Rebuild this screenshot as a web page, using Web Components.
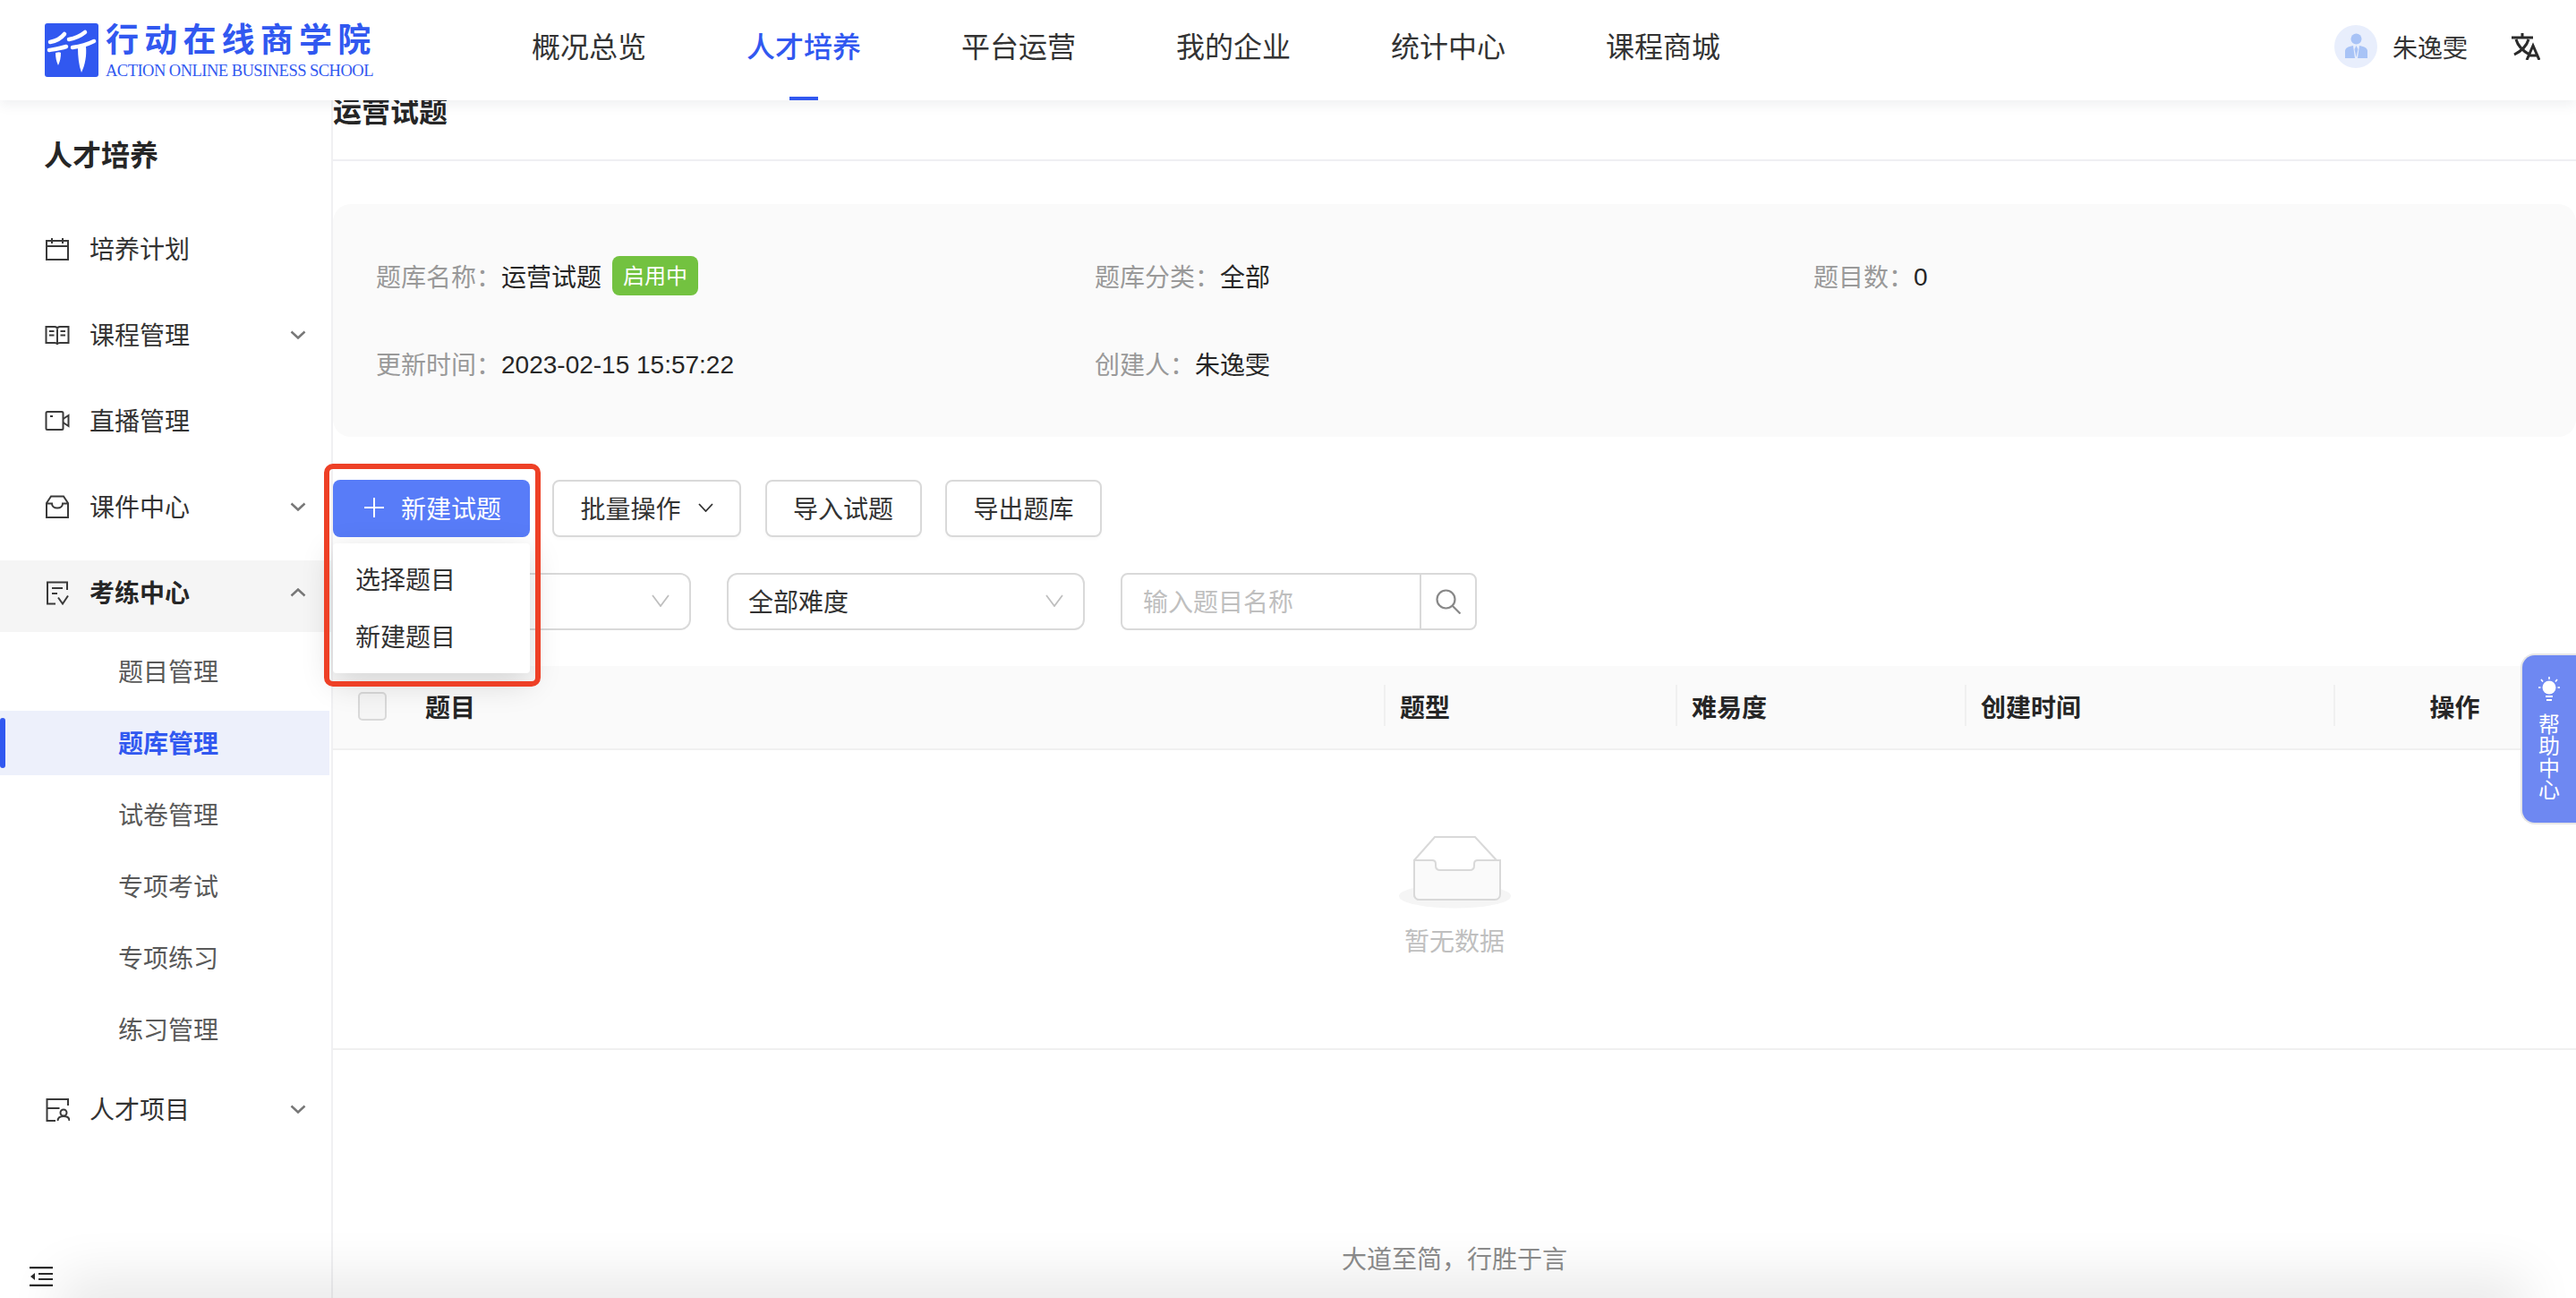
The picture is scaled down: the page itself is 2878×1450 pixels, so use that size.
<!DOCTYPE html>
<html lang="zh-CN">
<head>
<meta charset="utf-8">
<title>运营试题</title>
<style>
    html, body { margin: 0; height: 100%; overflow: hidden; background: #fff; }
    body {
        font-family: "Liberation Sans", "Noto Sans CJK SC", sans-serif;
        font-size: 28px;
        color: #262626;
    }
    .page { display: flex; height: 1338px; }
</style>
</head>
<body>

<app-header>
    <top-link>概况总览</top-link>
    <top-link active>人才培养</top-link>
    <top-link>平台运营</top-link>
    <top-link>我的企业</top-link>
    <top-link>统计中心</top-link>
    <top-link>课程商城</top-link>
</app-header>

<div class="page">
    <side-menu>
        <side-item icon="calendar">培养计划</side-item>
        <side-item icon="book" arrow="down">课程管理</side-item>
        <side-item icon="video">直播管理</side-item>
        <side-item icon="inbox" arrow="down">课件中心</side-item>
        <side-item icon="exam" arrow="up" open>考练中心</side-item>
        <side-sub>题目管理</side-sub>
        <side-sub active>题库管理</side-sub>
        <side-sub>试卷管理</side-sub>
        <side-sub>专项考试</side-sub>
        <side-sub>专项练习</side-sub>
        <side-sub last>练习管理</side-sub>
        <side-item icon="project" arrow="down">人才项目</side-item>
    </side-menu>

    <main-panel>
        <info-card>
            <info-field label="题库名称：">运营试题<status-badge>启用中</status-badge></info-field>
            <info-field label="题库分类：">全部</info-field>
            <info-field label="题目数：" num>0</info-field>
            <info-field label="更新时间：" num>2023-02-15 15:57:22</info-field>
            <info-field label="创建人：">朱逸雯</info-field>
        </info-card>

        <tool-bar>
            <add-menu>新建试题</add-menu>
            <ui-button arrow>批量操作</ui-button>
            <ui-button>导入试题</ui-button>
            <ui-button>导出题库</ui-button>
        </tool-bar>

        <filter-bar>
            <ui-select></ui-select>
            <ui-select>全部难度</ui-select>
            <search-box placeholder="输入题目名称"></search-box>
        </filter-bar>

        <question-table></question-table>
    </main-panel>
</div>

<help-tab>帮助中心</help-tab>
<bottom-fade></bottom-fade>

<script>
const ICONS = {
    calendar: '<rect x="2" y="5" width="24" height="21"/><path d="M2 11h24M8 2v6M20 2v6"/>',
    book: '<path d="M1.500 5H11c1.700 0 3 1 3 2.500C14 6 15.300 5 17 5h9.500v18H17c-1.700 0-3 .6-3 2 0-1.400-1.300-2-3-2H1.500z"/><path d="M14 7.500V25M5 10h5.500M5 14.500h5.500M17.500 10H23M17.500 14.500H23"/>',
    video: '<rect x="1.500" y="4" width="19" height="20" rx="1.500"/><path d="M6 9h3M20.500 12l6-4v12l-6-4"/>',
    inbox: '<path d="M7 2.500h14L26 10v16H2V10zM2 10.500h6c0 3 2.500 5 6 5s6-2 6-5h6"/>',
    exam: '<path d="M25 11V2.500H3v24h9M8 9h12M8 15h6M15 19.500l5 7 6-9"/>',
    project: '<path d="M26 10V3H2.500v24H12M2.500 13h14"/><circle cx="21" cy="18" r="3.500"/><path d="M14.500 27c0-3.200 2.800-5 6.500-5s6.500 1.800 6.500 5"/>'
};

class AppHeader extends HTMLElement {
    constructor() {
        super();
        this.attachShadow({mode: 'open'});
        this.shadowRoot.innerHTML = `
            <style>
                :host {
                    display: flex;
                    align-items: center;
                    height: 112px;
                    padding: 0 40px 0 50px;
                    box-sizing: border-box;
                    background: #fff;
                    box-shadow: 0 4px 14px rgba(40, 50, 80, .08);
                    position: relative;
                    z-index: 5;
                }
                .logo { display: flex; gap: 8px; width: 544px; flex: none; }
                .mark { width: 60px; height: 60px; display: block; }
                .words { display: flex; flex-direction: column; color: #3158f0; height: 60px; white-space: nowrap; }
                .cn { font-size: 37px; font-weight: 700; line-height: 38px; margin-top: 1px; letter-spacing: 6.200px; }
                .en { font-family: "Liberation Serif", serif; font-size: 18.500px; line-height: 18px; margin-top: 5px; letter-spacing: -.52px; }
                nav { display: flex; gap: 112px; }
                .right { margin-left: auto; display: flex; align-items: center; margin-top: -8px; }
                .avatar { width: 48px; height: 48px; display: block; margin-right: 17px; }
                .name { font-size: 28px; color: #333; width: 84px; margin-right: 49px; }
                .lang { width: 32px; height: 30px; display: block; }
            </style>
            <div class="logo">
                <svg class="mark" viewBox="0 0 60 60">
                    <rect width="60" height="60" rx="3" fill="#3158f0"/>
                    <g fill="none" stroke="#fff" stroke-linecap="round" stroke-width="4.500">
                        <path d="M6 21c6-1 12-4 16-9"/>
                        <path d="M5 30c6-1 13-2 19-4"/>
                        <path d="M27 18c6-1 13-4 18-8"/>
                        <path d="M31 27c8-1 16-3 24-7"/>
                    </g>
                    <path d="M12 33c3-1 5-1 6 0 0 5-1 10-3 14-2-4-3-9-3-14zM37 27l9-1c1 10-1 21-5 29-3-8-4-18-4-28z" fill="#fff"/>
                </svg>
                <div class="words">
                    <span class="cn">行动在线商学院</span>
                    <span class="en">ACTION ONLINE BUSINESS SCHOOL</span>
                </div>
            </div>
            <nav><slot></slot></nav>
            <div class="right">
                <svg class="avatar" viewBox="0 0 48 48">
                    <circle cx="24" cy="24" r="24" fill="#e8eefc"/>
                    <circle cx="24.500" cy="15.500" r="6" fill="#a8c3f6"/>
                    <path d="M12 37v-8c0-3 3-5 9-6l2 14zM37 37v-8c0-3-3-5-9-6l-2 14zM24.500 23l2 4-2 9-2-9z" fill="#a8c3f6"/>
                </svg>
                <span class="name">朱逸雯</span>
                <svg class="lang" viewBox="0 0 32 30" fill="none" stroke="#2b2b2b" stroke-width="3">
                    <path d="M0 5h24M12 0v5M5 7c2 7 8 13 15 17M19 7c-2 7-8 13-16 17"/>
                    <path d="M17 30l7-16 7 16M19.500 25h9"/>
                </svg>
            </div>
        `;
    }
}

class TopLink extends HTMLElement {
    constructor() {
        super();
        this.attachShadow({mode: 'open'});
        this.shadowRoot.innerHTML = `
            <style>
                :host {
                    display: flex;
                    align-items: center;
                    height: 112px;
                    padding-bottom: 12px;
                    box-sizing: border-box;
                    position: relative;
                    font-size: 32px;
                    color: #333;
                }
                :host([active]) { color: #3158f0; font-weight: 500; }
                :host([active])::after {
                    content: '';
                    position: absolute;
                    left: 48px;
                    bottom: 0;
                    width: 32px;
                    height: 4px;
                    background: #3158f0;
                }
            </style>
            <slot></slot>
        `;
    }
}

class SideMenu extends HTMLElement {
    constructor() {
        super();
        this.attachShadow({mode: 'open'});
        this.shadowRoot.innerHTML = `
            <style>
                :host {
                    display: flex;
                    flex-direction: column;
                    flex: none;
                    width: 372px;
                    height: 100%;
                    box-sizing: border-box;
                    border-right: 2px solid #f0f0f2;
                    background: #fff;
                }
                h2 {
                    margin: 0 0 16px 49px;
                    font-size: 32px;
                    font-weight: 700;
                    height: 114px;
                    line-height: 124px;
                    color: #262626;
                }
                .collapse { margin: auto 0 13px 33px; width: 26px; height: 22px; display: block; }
            </style>
            <h2>人才培养</h2>
            <slot></slot>
            <svg class="collapse" viewBox="0 0 26 22" fill="none" stroke="#2b2b2b" stroke-width="2.200">
                <path d="M0 1.100h26M10 8h16M10 14h16M0 20.900h26"/>
                <path d="M6 7v8l-5-4z" fill="#2b2b2b" stroke="none"/>
            </svg>
        `;
    }
}

class SideItem extends HTMLElement {
    constructor() {
        super();
        this.attachShadow({mode: 'open'});
        this.shadowRoot.innerHTML = `
            <style>
                :host {
                    display: flex;
                    align-items: center;
                    flex: none;
                    height: 80px;
                    margin-bottom: 16px;
                    padding: 0 28px 10px 50px;
                    box-sizing: border-box;
                    color: #333;
                }
                :host([open]) { background: #f5f5f5; font-weight: 700; margin-bottom: 0; color: #262626; }
                .icon { width: 28px; height: 28px; flex: none; margin-right: 23px; margin-top: 2px; }
                .text { flex: 1; margin-left: -1px; }
                .arrow { width: 18px; height: 10px; flex: none; margin-top: 2px; }
            </style>
            <svg class="icon" viewBox="0 0 28 28" fill="none" stroke="#3a3a3a" stroke-width="2"></svg>
            <span class="text"><slot></slot></span>
            <svg class="arrow" viewBox="0 0 18 10" fill="none" stroke="#777" stroke-width="2.500"></svg>
        `;
    }

    connectedCallback() {
        this.shadowRoot.querySelector('.icon').innerHTML = ICONS[this.getAttribute('icon')] || '';
        const arrow = this.shadowRoot.querySelector('.arrow');
        if (this.getAttribute('arrow') === 'down') {
            arrow.innerHTML = '<path d="M1.500 1.500L9 8.500l7.500-7"/>';
        } else if (this.getAttribute('arrow') === 'up') {
            arrow.innerHTML = '<path d="M1.500 8.500L9 1.500l7.500 7"/>';
        }
    }
}

class SideSub extends HTMLElement {
    constructor() {
        super();
        this.attachShadow({mode: 'open'});
        this.shadowRoot.innerHTML = `
            <style>
                :host {
                    display: flex;
                    align-items: center;
                    flex: none;
                    height: 72px;
                    margin-top: 8px;
                    padding: 0 0 2px 132px;
                    box-sizing: border-box;
                    position: relative;
                    color: #595959;
                }
                :host([last]) { margin-bottom: 17px; }
                :host([active]) { background: #edf0fb; color: #3158f0; font-weight: 700; margin-right: 2px; }
                :host([active])::before {
                    content: '';
                    position: absolute;
                    left: 0;
                    top: 8px;
                    width: 6px;
                    height: 56px;
                    border-radius: 3px;
                    background: #3158f0;
                }
            </style>
            <slot></slot>
        `;
    }
}

class MainPanel extends HTMLElement {
    constructor() {
        super();
        this.attachShadow({mode: 'open'});
        this.shadowRoot.innerHTML = `
            <style>
                :host { display: flex; flex-direction: column; flex: 1; min-width: 0; height: 100%; }
                h1 {
                    margin: 0 0 48px;
                    height: 68px;
                    box-sizing: border-box;
                    border-bottom: 2px solid #efeff3;
                    font-size: 32px;
                    line-height: 26px;
                    font-weight: 600;
                    color: #262626;
                }
                footer {
                    margin-top: auto;
                    height: 40px;
                    line-height: 40px;
                    margin-bottom: 22px;
                    text-align: center;
                    color: #8c8c8c;
                }
            </style>
            <h1>运营试题</h1>
            <slot></slot>
            <footer>大道至简，行胜于言</footer>
        `;
    }
}

class InfoCard extends HTMLElement {
    constructor() {
        super();
        this.attachShadow({mode: 'open'});
        this.shadowRoot.innerHTML = `
            <style>
                :host {
                    display: grid;
                    grid-template-columns: 803px 803px 1fr;
                    row-gap: 54px;
                    padding: 58px 48px 60px;
                    margin-bottom: 48px;
                    background: #fafafa;
                    border-radius: 20px;
                }
            </style>
            <slot></slot>
        `;
    }
}

class InfoField extends HTMLElement {
    constructor() {
        super();
        this.attachShadow({mode: 'open'});
        this.shadowRoot.innerHTML = `
            <style>
                :host { display: flex; align-items: center; height: 44px; color: #262626; }
                .label { color: #999; }
                .value { display: flex; align-items: center; }
                :host([num]) .value { padding-top: 3px; }
            </style>
            <span class="label"></span><div class="value"><slot></slot></div>
        `;
    }

    connectedCallback() {
        this.shadowRoot.querySelector('.label').textContent = this.getAttribute('label');
    }
}

class StatusBadge extends HTMLElement {
    constructor() {
        super();
        this.attachShadow({mode: 'open'});
        this.shadowRoot.innerHTML = `
            <style>
                :host {
                    display: block;
                    width: 96px;
                    height: 44px;
                    margin-left: 12px;
                    border-radius: 8px;
                    background: #73c240;
                    color: #fff;
                    font-size: 24px;
                    line-height: 46px;
                    text-align: center;
                }
            </style>
            <slot></slot>
        `;
    }
}

class ToolBar extends HTMLElement {
    constructor() {
        super();
        this.attachShadow({mode: 'open'});
        this.shadowRoot.innerHTML = `
            <style>
                :host { display: flex; gap: 26.500px; height: 64px; margin-bottom: 40px; }
                ::slotted(add-menu) { margin-right: -1.500px; }
            </style>
            <slot></slot>
        `;
    }
}

class UiButton extends HTMLElement {
    constructor() {
        super();
        this.attachShadow({mode: 'open'});
        this.shadowRoot.innerHTML = `
            <style>
                :host {
                    display: flex;
                    align-items: center;
                    height: 64px;
                    padding: 0 29.500px 2px;
                    box-sizing: border-box;
                    border: 2px solid #d9d9d9;
                    border-radius: 8px;
                    background: #fff;
                    box-shadow: 0 3px 3px rgba(0, 0, 0, .02);
                    color: #333;
                }
                svg { display: none; width: 17px; height: 10px; margin-left: 19px; }
                :host([arrow]) svg { display: block; }
            </style>
            <slot></slot>
            <svg viewBox="0 0 17 10" fill="none" stroke="#333" stroke-width="1.800"><path d="M1 1l7.500 8L16 1"/></svg>
        `;
    }
}

// the primary button plus its open dropdown and the red review box around both
class AddMenu extends HTMLElement {
    constructor() {
        super();
        this.attachShadow({mode: 'open'});
        this.shadowRoot.innerHTML = `
            <style>
                :host { display: block; width: 220px; height: 64px; position: relative; z-index: 3; }
                .btn {
                    display: flex;
                    align-items: center;
                    height: 64px;
                    padding: 0 0 2px 35px;
                    box-sizing: border-box;
                    border-radius: 8px;
                    background: #587cf8;
                    color: #fff;
                }
                .btn svg { width: 22px; height: 22px; margin-right: 19px; }
                .drop {
                    position: absolute;
                    top: 71px;
                    left: 0;
                    width: 220px;
                    height: 145px;
                    padding-top: 10px;
                    box-sizing: border-box;
                    border-radius: 4px;
                    background: #fff;
                    box-shadow: 0 10px 36px rgba(0, 0, 0, .16);
                    color: #333;
                }
                .drop div { height: 64px; line-height: 64px; padding-left: 25px; }
                .mark {
                    position: absolute;
                    left: -10px;
                    top: -18px;
                    width: 242px;
                    height: 249px;
                    box-sizing: border-box;
                    border: 6px solid #ee4026;
                    border-radius: 10px;
                }
            </style>
            <div class="btn">
                <svg viewBox="0 0 22 22" fill="none" stroke="#fff" stroke-width="2"><path d="M11 0v22M0 11h22"/></svg>
                <slot></slot>
            </div>
            <div class="drop"><div>选择题目</div><div>新建题目</div></div>
            <div class="mark"></div>
        `;
    }
}

class FilterBar extends HTMLElement {
    constructor() {
        super();
        this.attachShadow({mode: 'open'});
        this.shadowRoot.innerHTML = `
            <style>
                :host { display: flex; gap: 40px; height: 64px; margin-bottom: 40px; }
            </style>
            <slot></slot>
        `;
    }
}

class UiSelect extends HTMLElement {
    constructor() {
        super();
        this.attachShadow({mode: 'open'});
        this.shadowRoot.innerHTML = `
            <style>
                :host {
                    display: flex;
                    align-items: center;
                    justify-content: space-between;
                    width: 400px;
                    height: 64px;
                    padding: 0 22px 2px;
                    box-sizing: border-box;
                    border: 2px solid #d9d9d9;
                    border-radius: 12px;
                    color: #333;
                }
                svg { width: 20px; height: 14px; }
            </style>
            <span><slot></slot></span>
            <svg viewBox="0 0 20 14" fill="none" stroke="#bfbfbf" stroke-width="1.800"><path d="M1 1l9 12 9-12"/></svg>
        `;
    }
}

class SearchBox extends HTMLElement {
    constructor() {
        super();
        this.attachShadow({mode: 'open'});
        this.shadowRoot.innerHTML = `
            <style>
                :host {
                    display: flex;
                    width: 398px;
                    height: 64px;
                    box-sizing: border-box;
                    border: 2px solid #d9d9d9;
                    border-radius: 8px;
                }
                .hint { flex: 1; padding-left: 23px; line-height: 64px; height: 60px; color: #bfbfbf; }
                .go {
                    width: 60px;
                    border-left: 2px solid #d9d9d9;
                    display: flex;
                    align-items: center;
                    justify-content: center;
                }
                svg { width: 28px; height: 28px; }
            </style>
            <div class="hint"></div>
            <div class="go">
                <svg viewBox="0 0 28 28" fill="none" stroke="#888" stroke-width="2.200">
                    <circle cx="11.500" cy="11.500" r="10"/><path d="M18.500 18.500L27.500 27.500"/>
                </svg>
            </div>
        `;
    }

    connectedCallback() {
        this.shadowRoot.querySelector('.hint').textContent = this.getAttribute('placeholder');
    }
}

class QuestionTable extends HTMLElement {
    constructor() {
        super();
        this.attachShadow({mode: 'open'});
        this.shadowRoot.innerHTML = `
            <style>
                :host { display: block; border-bottom: 2px solid #f0f0f0; }
                .head {
                    display: grid;
                    grid-template-columns: 1174px 326px 323px 412px 1fr;
                    align-items: center;
                    height: 94px;
                    box-sizing: border-box;
                    padding-bottom: 2px;
                    background: #fafafa;
                    border-bottom: 2px solid #f0f0f0;
                    font-weight: 700;
                }
                .cell { position: relative; padding-left: 18px; }
                .cell + .cell::before {
                    content: '';
                    position: absolute;
                    left: 0;
                    top: -4px;
                    width: 2px;
                    height: 46px;
                    background: #f0f0f0;
                }
                .cell:first-child { display: flex; align-items: center; padding-left: 28px; gap: 43px; }
                .cell:last-child { padding-left: 0; text-align: center; }
                .check {
                    width: 32px;
                    height: 32px;
                    box-sizing: border-box;
                    border: 2px solid #d9d9d9;
                    border-radius: 5px;
                    background: #f5f5f5;
                }
                .empty {
                    display: flex;
                    flex-direction: column;
                    align-items: center;
                    height: 333px;
                    padding-top: 95px;
                    box-sizing: border-box;
                    color: #bfbfbf;
                }
                .empty svg { width: 125px; height: 82px; display: block; margin-bottom: 18px; }
                .empty span { line-height: 40px; }
            </style>
            <div class="head">
                <div class="cell"><div class="check"></div><span>题目</span></div>
                <div class="cell">题型</div>
                <div class="cell">难易度</div>
                <div class="cell">创建时间</div>
                <div class="cell">操作</div>
            </div>
            <div class="empty">
                <svg viewBox="0 0 125 82">
                    <ellipse cx="62.500" cy="68" rx="62.500" ry="13.500" fill="#f5f5f5"/>
                    <path d="M17 28L40 2h45l24 26v38c0 3-2 6-6 6H23c-4 0-6-3-6-6z" fill="#fff" stroke="#d9d9d9" stroke-width="2"/>
                    <path d="M17 28h20c3 0 4 2 4 4v2c0 3 2 5 5 5h33c3 0 5-2 5-5v-2c0-2 1-4 4-4h25v38c0 3-2 6-6 6H23c-4 0-6-3-6-6z" fill="#fafafa" stroke="#d9d9d9" stroke-width="2"/>
                </svg>
                <span>暂无数据</span>
            </div>
        `;
    }
}

class HelpTab extends HTMLElement {
    constructor() {
        super();
        this.attachShadow({mode: 'open'});
        this.shadowRoot.innerHTML = `
            <style>
                :host {
                    position: fixed;
                    top: 730px;
                    right: 0;
                    width: 62px;
                    height: 191px;
                    box-sizing: border-box;
                    padding-top: 24px;
                    display: flex;
                    flex-direction: column;
                    align-items: center;
                    border: 2px solid #e6e6e6;
                    border-right: 0;
                    border-radius: 16px 0 0 16px;
                    background: #6e88f2;
                    color: #fff;
                    z-index: 4;
                }
                svg { width: 24px; height: 28px; margin-bottom: 14px; flex: none; }
                .text { font-size: 24px; line-height: 24.300px; width: 24px; text-align: center; }
            </style>
            <svg viewBox="0 0 24 28" fill="#fff">
                <circle cx="12" cy="12" r="7.500"/>
                <path d="M8 21h8v2H8zM9 25h6v2H9z"/>
                <path d="M12 0v3M3 3l2 2.500M21 3l-2 2.500M0 12h2.500M21.500 12H24" stroke="#fff" stroke-width="1.600"/>
            </svg>
            <div class="text"><slot></slot></div>
        `;
    }
}

// soft shadow from something just below the window, seen along the bottom edge
class BottomFade extends HTMLElement {
    constructor() {
        super();
        this.attachShadow({mode: 'open'});
        this.shadowRoot.innerHTML = `
            <style>
                :host {
                    position: fixed;
                    left: 90px;
                    right: 80px;
                    bottom: -24px;
                    height: 24px;
                    pointer-events: none;
                    background: #e6e6e6;
                    box-shadow: 0 0 60px 24px rgba(0, 0, 0, .09);
                    z-index: 6;
                }
            </style>
        `;
    }
}

customElements.define('app-header', AppHeader);
customElements.define('top-link', TopLink);
customElements.define('side-menu', SideMenu);
customElements.define('side-item', SideItem);
customElements.define('side-sub', SideSub);
customElements.define('main-panel', MainPanel);
customElements.define('info-card', InfoCard);
customElements.define('info-field', InfoField);
customElements.define('status-badge', StatusBadge);
customElements.define('tool-bar', ToolBar);
customElements.define('ui-button', UiButton);
customElements.define('add-menu', AddMenu);
customElements.define('filter-bar', FilterBar);
customElements.define('ui-select', UiSelect);
customElements.define('search-box', SearchBox);
customElements.define('question-table', QuestionTable);
customElements.define('help-tab', HelpTab);
customElements.define('bottom-fade', BottomFade);
</script>
</body>
</html>
